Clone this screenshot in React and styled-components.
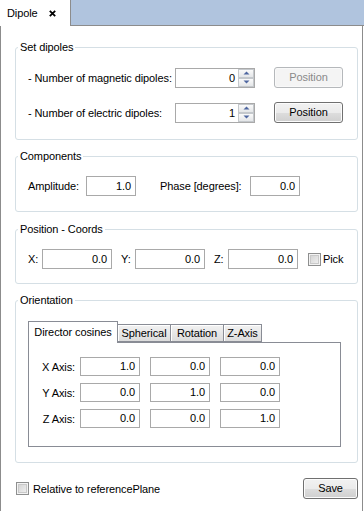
import React from 'react';
import styled, { createGlobalStyle } from 'styled-components';

const Global = createGlobalStyle`
  html, body { margin: 0; padding: 0; background: #fff; }
  body {
    font-family: "Liberation Sans", Arial, sans-serif;
    font-size: 11px;
    letter-spacing: -0.1px;
    color: #000;
  }
  #root { width: 364px; height: 511px; overflow: hidden; }
`;

const Window = styled.div`
  width: 364px;
  height: 511px;
  display: flex;
  flex-direction: column;
  background: #fff;
`;

const TabBar = styled.div`
  display: flex;
  height: 26px;
  flex: none;
`;

const DocTab = styled.div`
  width: 63px;
  border-right: 1px solid #8c8c8c;
  background: #fff;
  display: flex;
  align-items: center;
  padding-left: 7px;
  box-sizing: content-box;
  gap: 11px;
  line-height: 13px;
`;

const DocTabLabel = styled.span`
  padding-top: 1px;
`;

const BarFill = styled.div`
  flex: 1;
  background: #b0c4de;
  border-bottom: 1px solid #8c8c8c;
`;

const Panel = styled.div`
  flex: 1;
  width: 363px;
  box-sizing: border-box;
  border-left: 1px solid #8c8c8c;
  border-right: 1px solid #8c8c8c;
  padding: 15px 4px 0 14px;
  display: flex;
  flex-direction: column;
`;

const Group = styled.fieldset`
  margin: ${p => p.$mt || 0}px 0 0 0;
  padding: 0;
  border: 1px solid #d5dfe5;
  border-radius: 3px;
  min-inline-size: 0;
`;

const Legend = styled.legend`
  padding: 0 2px;
  margin-left: 2px;
  line-height: 13px;
  font-size: 11px;
`;

const GroupBody = styled.div`
  padding: ${p => p.$pad};
  display: flex;
  flex-direction: column;
  gap: ${p => p.$gap || 0}px;
`;

const Row = styled.div`
  display: flex;
  align-items: center;
  height: ${p => p.$h || 20}px;
`;

const Label = styled.span`
  flex: none;
  width: ${p => p.$w}px;
  margin-left: ${p => p.$ml || 0}px;
  white-space: nowrap;
`;

const LineEdit = styled.div`
  flex: none;
  box-sizing: border-box;
  width: ${p => p.$w}px;
  height: ${p => p.$h || 20}px;
  border: 1px solid #a9a9a9;
  background: #fff;
  text-align: right;
  padding-right: 4px;
  line-height: ${p => (p.$h || 20) - 2}px;
`;

const SpinBox = styled.div`
  flex: none;
  box-sizing: border-box;
  width: 80px;
  height: 20px;
  border: 1px solid #a9a9a9;
  display: flex;
  background: #fff;
`;

const SpinValue = styled.div`
  flex: 1;
  text-align: right;
  padding-right: 3px;
  line-height: 18px;
`;

const SpinButtons = styled.div`
  width: 16px;
  display: flex;
  flex-direction: column;
`;

const SpinBtn = styled.div`
  height: 9px;
  box-sizing: border-box;
  border: 1px solid #c4c8cc;
  background: linear-gradient(#fafafa, #e4e6e8);
  display: flex;
  align-items: center;
  justify-content: center;
`;

const PushButton = styled.div`
  flex: none;
  box-sizing: border-box;
  width: ${p => p.$w}px;
  height: 21px;
  margin-left: auto;
  border: 1px solid ${p => (p.$disabled ? '#b5b8bb' : '#707070')};
  border-radius: 3px;
  color: ${p => (p.$disabled ? '#8a8a8a' : '#000')};
  background: ${p =>
    p.$disabled
      ? '#f4f4f4'
      : 'linear-gradient(#f2f2f2 0%, #ebebeb 50%, #dddddd 51%, #cfcfcf 100%)'};
  box-shadow: inset 0 0 0 1px ${p => (p.$disabled ? '#f9f9f9' : '#fcfcfc')};
  display: flex;
  align-items: center;
  justify-content: center;
  line-height: 13px;
`;

const CheckLabel = styled.label`
  display: flex;
  align-items: center;
  margin-left: ${p => p.$ml || 0}px;
  gap: ${p => p.$gap || 3}px;
`;

const CheckBox = styled.span`
  flex: none;
  box-sizing: border-box;
  width: 13px;
  height: 13px;
  border: 1px solid #8e8f8f;
  background: linear-gradient(135deg, #cfcfcf, #f4f4f4);
  box-shadow: inset 0 0 0 1px #f3f3f3, inset 0 0 0 2px #c9c9c9;
`;

const TabWidget = styled.div`
  width: 313px;
  display: flex;
  flex-direction: column;
`;

const TabRow = styled.div`
  display: flex;
  align-items: flex-end;
`;

const Tab = styled.div`
  flex: none;
  box-sizing: border-box;
  width: ${p => p.$w}px;
  height: ${p => (p.$active ? 22 : 18)}px;
  margin-bottom: ${p => (p.$active ? -1 : 0)}px;
  position: relative;
  z-index: ${p => (p.$active ? 1 : 0)};
  border: 1px solid #898c95;
  border-bottom: ${p => (p.$active ? 'none' : '1px solid #898c95')};
  border-left: ${p => (p.$first || p.$active ? '1px solid #898c95' : 'none')};
  background: ${p => (p.$active ? '#fff' : 'linear-gradient(#f2f2f2, #dcdcdc)')};
  box-shadow: ${p => (p.$active ? 'none' : 'inset 1px 1px 0 #fff')};
  display: flex;
  align-items: center;
  justify-content: center;
  line-height: 13px;
  ${p => (p.$active ? 'padding-bottom: 1px;' : '')}
`;

const Pane = styled.div`
  box-sizing: border-box;
  height: 105px;
  border: 1px solid #898c95;
  background: #fff;
  padding-top: 14px;
  display: flex;
  flex-direction: column;
  gap: 7px;
`;

const AxisLabel = styled.span`
  flex: none;
  box-sizing: border-box;
  width: 51px;
  padding-right: 5px;
  text-align: right;
`;

const Cells = styled.div`
  display: flex;
  gap: 10px;
`;

const BottomRow = styled.div`
  display: flex;
  align-items: center;
  margin-top: 15px;
  padding-left: 1px;
  height: 21px;
`;

const CloseIcon = () => (
  <svg width="7" height="7" viewBox="0 0 7 7">
    <path d="M0.8 0.8 L6.2 6.2 M6.2 0.8 L0.8 6.2" stroke="#000" strokeWidth="1.8" />
  </svg>
);

const Arrow = ({ up }) => (
  <svg width="7" height="4" viewBox="0 0 7 4">
    <path d={up ? 'M0.5 3.5 L3.5 0.5 L6.5 3.5 Z' : 'M0.5 0.5 L3.5 3.5 L6.5 0.5 Z'} fill="#4e66a0" />
  </svg>
);

const Spin = ({ value }) => (
  <SpinBox>
    <SpinValue>{value}</SpinValue>
    <SpinButtons>
      <SpinBtn><Arrow up /></SpinBtn>
      <SpinBtn><Arrow /></SpinBtn>
    </SpinButtons>
  </SpinBox>
);

const axes = [
  ['X Axis:', ['1.0', '0.0', '0.0']],
  ['Y Axis:', ['0.0', '1.0', '0.0']],
  ['Z Axis:', ['0.0', '0.0', '1.0']],
];

export default function App() {
  return (
    <>
      <Global />
      <Window>
        <TabBar>
          <DocTab>
            <DocTabLabel>Dipole</DocTabLabel>
            <CloseIcon />
          </DocTab>
          <BarFill />
        </TabBar>
        <Panel>
          <Group>
            <Legend>Set dipoles</Legend>
            <GroupBody $pad="13px 14px 16px 12px" $gap={14}>
              <Row $h={21}>
                <Label $w={147}>- Number of magnetic dipoles:</Label>
                <Spin value="0" />
                <PushButton $w={69} $disabled>Position</PushButton>
              </Row>
              <Row $h={21}>
                <Label $w={147}>- Number of electric dipoles:</Label>
                <Spin value="1" />
                <PushButton $w={69}>Position</PushButton>
              </Row>
            </GroupBody>
          </Group>

          <Group $mt={10}>
            <Legend>Components</Legend>
            <GroupBody $pad="13px 12px 15px 12px">
              <Row>
                <Label $w={58}>Amplitude:</Label>
                <LineEdit $w={50}>1.0</LineEdit>
                <Label $w={90} $ml={24}>Phase [degrees]:</Label>
                <LineEdit $w={50}>0.0</LineEdit>
              </Row>
            </GroupBody>
          </Group>

          <Group $mt={11}>
            <Legend>Position - Coords</Legend>
            <GroupBody $pad="13px 12px 14px 12px">
              <Row>
                <Label $w={14}>X:</Label>
                <LineEdit $w={70}>0.0</LineEdit>
                <Label $w={14} $ml={9}>Y:</Label>
                <LineEdit $w={70}>0.0</LineEdit>
                <Label $w={14} $ml={9}>Z:</Label>
                <LineEdit $w={70}>0.0</LineEdit>
                <CheckLabel $ml={10} $gap={2}>
                  <CheckBox />
                  <span>Pick</span>
                </CheckLabel>
              </Row>
            </GroupBody>
          </Group>

          <Group $mt={10}>
            <Legend>Orientation</Legend>
            <GroupBody $pad="14px 15px 15px 12px">
              <TabWidget>
                <TabRow>
                  <Tab $w={90} $active>Director cosines</Tab>
                  <Tab $w={53}>Spherical</Tab>
                  <Tab $w={53}>Rotation</Tab>
                  <Tab $w={38}>Z-Axis</Tab>
                </TabRow>
                <Pane>
                  {axes.map(([name, vals]) => (
                    <Row key={name} $h={19}>
                      <AxisLabel>{name}</AxisLabel>
                      <Cells>
                        {vals.map((v, i) => (
                          <LineEdit key={i} $w={60} $h={19}>{v}</LineEdit>
                        ))}
                      </Cells>
                    </Row>
                  ))}
                </Pane>
              </TabWidget>
            </GroupBody>
          </Group>

          <BottomRow>
            <CheckLabel $gap={4}>
              <CheckBox />
              <span>Relative to referencePlane</span>
            </CheckLabel>
            <PushButton $w={55}>Save</PushButton>
          </BottomRow>
        </Panel>
      </Window>
    </>
  );
}
